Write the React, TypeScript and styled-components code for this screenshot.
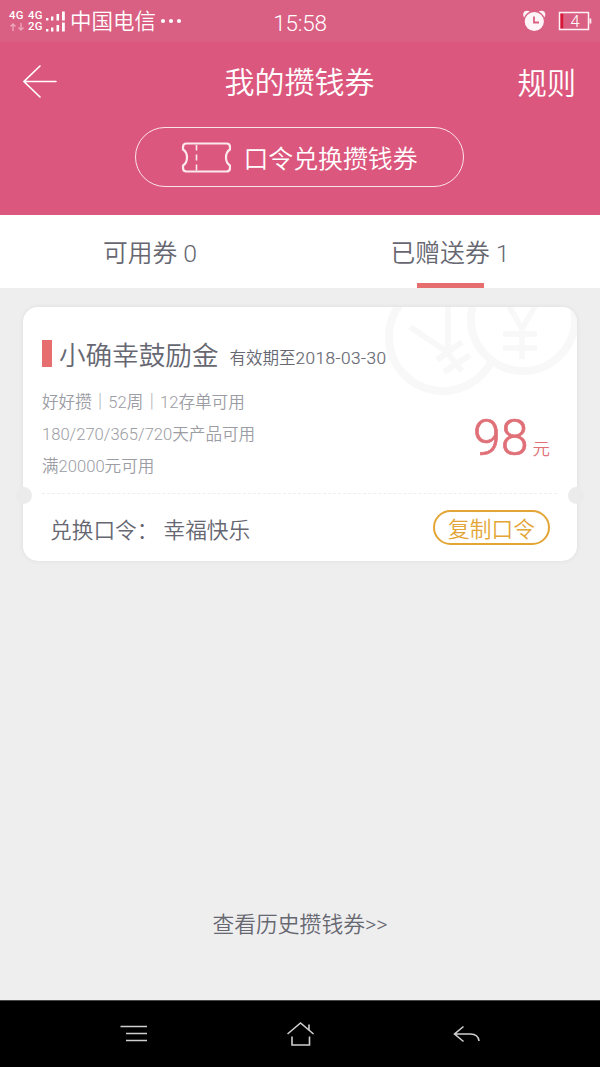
import React from 'react';
import styled, { createGlobalStyle } from 'styled-components';

const GlobalStyle = createGlobalStyle`
  * { box-sizing: border-box; }
  body {
    margin: 0;
    background: #eeeeee;
    font-family: Roboto, 'Noto Sans CJK SC', sans-serif;
    font-weight: 350;
    -webkit-font-smoothing: antialiased;
  }
`;

const Screen = styled.div`
  width: 600px;
  height: 1067px;
  display: flex;
  flex-direction: column;
  background: #eeeeee;
  overflow: hidden;
  white-space: nowrap;
`;

const StatusBar = styled.div`
  height: 42px;
  display: grid;
  grid-template-columns: 1fr auto 1fr;
  align-items: center;
  padding: 0 8px 0 9px;
  background: #d95f83;
  color: #fff;
`;

const StatusLeft = styled.div`
  display: flex;
  align-items: center;
`;

const StatusRight = styled.div`
  display: flex;
  align-items: center;
  justify-content: flex-end;
  gap: 12px;
`;

const Carrier = styled.span`
  font-size: 21.5px;
  line-height: 30px;
  padding-top: 2px;
  margin-left: 5px;
`;

const Clock = styled.span`
  font-size: 22.5px;
  line-height: 30px;
  padding: 3px 1px 0 0;
  letter-spacing: -0.2px;
`;

const Header = styled.header`
  height: 173px;
  background: #dc577e;
  color: #fff;
  display: flex;
  flex-direction: column;
  align-items: center;
`;

const NavRow = styled.div`
  width: 100%;
  height: 80px;
  display: grid;
  grid-template-columns: 1fr auto 1fr;
  align-items: center;
  padding: 0 24px 0 23px;
`;

const NavTitle = styled.h1`
  margin: 0;
  font-size: 30px;
  font-weight: inherit;
  line-height: 40px;
  padding-top: 2px;
`;

const RuleLink = styled.span`
  justify-self: end;
  font-size: 29.3px;
  line-height: 40px;
  padding-top: 4px;
`;

const RedeemButton = styled.button`
  width: 329px;
  height: 60px;
  margin: 5px 1px 0 0;
  padding: 0;
  display: flex;
  align-items: center;
  justify-content: center;
  gap: 12px;
  border: 1.5px solid #fbe3ea;
  border-radius: 30px;
  background: none;
  color: #fff;
  font: inherit;
  font-size: 24.9px;
`;

const Tabs = styled.nav`
  height: 73px;
  display: grid;
  grid-template-columns: 1fr 1fr;
  background: #fff;
`;

const Tab = styled.div<{ $active?: boolean }>`
  display: flex;
  flex-direction: column;
  align-items: center;
  color: #666771;
  font-size: 24.8px;
  line-height: 78px;
  height: 73px;
  &::after {
    content: '';
    width: 67px;
    height: 5px;
    margin-top: -10px;
    background: ${(p) => (p.$active ? '#e66e6e' : 'transparent')};
  }
`;

const Main = styled.main`
  height: 712px;
  display: flex;
  flex-direction: column;
  align-items: center;
  padding-top: 19px;
`;

const Card = styled.section`
  position: relative;
  width: 554px;
  height: 254px;
  border-radius: 15px;
  background: #fff;
  box-shadow: 0 0 5px rgba(0, 0, 0, 0.07);
`;

const Watermark = styled.svg`
  position: absolute;
  top: 0;
  right: 0;
  border-radius: 0 15px 0 0;
`;

const Notch = styled.i<{ $side: 'left' | 'right' }>`
  position: absolute;
  top: 180px;
  ${(p) => p.$side}: -8px;
  width: 17px;
  height: 17px;
  border-radius: 50%;
  background: #ebebeb;
`;

const CardTop = styled.div`
  position: relative;
  height: 187px;
  margin: 0 20px 0 19px;
  padding-top: 30px;
  border-bottom: 1px dashed #eeeeee;
`;

const TitleRow = styled.div`
  display: flex;
  height: 34px;
`;

const Marker = styled.i`
  width: 10px;
  height: 27px;
  margin: 3px 7px 0 0;
  background: #e66e6e;
`;

const CouponName = styled.h2`
  margin: 0;
  font-size: 26.6px;
  font-weight: inherit;
  line-height: 37px;
  color: #666771;
`;

const Validity = styled.span`
  margin-left: 11px;
  font-size: 16.5px;
  line-height: 43px;
  color: #666771;
`;

const ValidityDate = styled.span`
  font-size: 17.2px;
  letter-spacing: 0.48px;
  -webkit-text-stroke: 0.2px #666771;
`;

const Conditions = styled.div`
  display: flex;
  justify-content: space-between;
  margin-top: 16px;
`;

const ConditionList = styled.ul`
  margin: 0;
  padding: 0;
  list-style: none;
  font-size: 16.6px;
  line-height: 32.2px;
  color: #9b9ca4;
`;

const Amount = styled.div`
  display: flex;
  align-items: baseline;
  gap: 4px;
  padding: 21px 7px 0 0;
  color: #e07078;
  font-size: 17.5px;
  line-height: 60px;
`;

const AmountValue = styled.strong`
  font-size: 50px;
  font-weight: 300;
  -webkit-text-stroke: 0.7px #e07078;
`;

const CardBottom = styled.div`
  height: 67px;
  display: flex;
  align-items: center;
  justify-content: space-between;
  padding: 2px 27px 0 27px;
  color: #666771;
  font-size: 21.7px;
`;

const Code = styled.span`
  margin-left: 5px;
`;

const CopyButton = styled.button`
  width: 117px;
  height: 35px;
  padding: 5px 0 0;
  margin-top: -2px;
  border: 2px solid #e3a535;
  border-radius: 18px;
  background: #fff;
  color: #e3a535;
  font: inherit;
  line-height: 26px;
`;

const HistoryLink = styled.a`
  margin-top: 348px;
  font-size: 21.8px;
  line-height: 32px;
  color: #666771;
`;

const SystemNav = styled.footer`
  height: 67px;
  display: flex;
  align-items: center;
  justify-content: space-between;
  padding: 0 120px 0 119px;
  background: #000;
  border-top: 1px solid #484848;
`;

const SignalBlock = styled.div`
  display: grid;
  grid-template-columns: 19px 18px 19px;
  grid-template-rows: 11px 11px;
  align-items: center;
  font: 500 11px/11px Roboto, sans-serif;
  letter-spacing: 0.4px;
`;

const SignalLabel = styled.span`
  font-size: 11.3px;
  line-height: 11px;
`;

const Arrows = () => (
  <svg width="15" height="10" viewBox="0 0 15 10" fill="none" stroke="#eda6ba" strokeWidth="1.400">
    <path d="M4 9V2M1.500 4.500L4 2l2.500 2.500M12 1v7M9.500 5.500L12 8l2.500-2.500" />
  </svg>
);

const Bars = () => (
  <svg width="19" height="10" viewBox="0 0 19 10" fill="#fff">
    <rect x="0" y="7" width="2.400" height="2.500" />
    <rect x="5" y="5.500" width="2.400" height="4" />
    <rect x="10.500" y="3" width="2.600" height="6.500" />
    <rect x="16" y="0.500" width="2.800" height="9" />
  </svg>
);

const SignalIcon = () => (
  <SignalBlock>
    <SignalLabel>4G</SignalLabel>
    <SignalLabel>4G</SignalLabel>
    <Bars />
    <Arrows />
    <SignalLabel>2G</SignalLabel>
    <Bars />
  </SignalBlock>
);

const Dots = styled.svg`
  margin-left: 4px;
`;

const DotsIcon = () => (
  <Dots width="24" height="6" viewBox="0 0 24 6" fill="#fff">
    <circle cx="3" cy="3" r="2.100" />
    <circle cx="11" cy="3" r="2.100" />
    <circle cx="19" cy="3" r="2.100" />
  </Dots>
);

const AlarmIcon = () => (
  <svg width="24" height="22" viewBox="0 0 24 22">
    <g fill="#fff4f7">
      <circle cx="5" cy="4.500" r="3.800" />
      <circle cx="19.500" cy="4.500" r="3.800" />
    </g>
    <circle cx="12.300" cy="11.500" r="10.200" fill="#fff4f7" stroke="#d95f83" strokeWidth="1.200" />
    <path d="M12 6.500v6h5" fill="none" stroke="#d95f83" strokeWidth="1.800" />
  </svg>
);

const BatteryIcon = () => (
  <svg width="34" height="20" viewBox="0 0 34 20">
    <rect x="1.500" y="1.500" width="29" height="17" fill="none" stroke="#fff0f4" strokeWidth="1.500" />
    <rect x="31.500" y="7.500" width="1.800" height="5" fill="#fff0f4" />
    <rect x="2.600" y="2.800" width="2.600" height="14.500" fill="#d81735" />
    <text x="12.500" y="16" fill="#fff" fontFamily="Roboto" fontSize="16.500" fontWeight="300">4</text>
  </svg>
);

const BackArrow = () => (
  <svg width="36" height="36" viewBox="0 0 36 36" fill="none" stroke="#fff" strokeWidth="1.600" strokeLinecap="round">
    <path d="M33 17.500H1M17 2L1 17.500l16 15.500" />
  </svg>
);

const TicketIcon = () => (
  <svg width="50" height="31" viewBox="0 0 50 31" fill="none" stroke="#fbe9ee" strokeWidth="2.200" strokeLinejoin="round">
    <path d="M5.500 1.500H45.500Q49 1.500 49 5V7.500Q45 10 45 15.500Q45 21 49 23.500V26Q49 29.500 45.500 29.500H5.500Q2 29.500 2 26V23.500Q6 21 6 15.500Q6 10 2 7.500V5Q2 1.500 5.500 1.500Z" />
    <path d="M15.500 3v5.500M15.500 12.500v6M15.500 22.500v6" strokeWidth="1.600" />
  </svg>
);

const CoinWatermark = () => (
  <Watermark width="194" height="94" viewBox="0 0 194 94" fill="none" stroke="#f8f8f8" strokeWidth="8">
    <circle cx="60" cy="30" r="54" />
    <path d="M27 20L63 44M65 0V44M63 44L79 64M54 53L79 35M61 65L87 48" strokeWidth="6" />
    <circle cx="140" cy="12" r="52" fill="#fff" />
    <path d="M122 -8L139 22L156 -8M139 22V52M120 27H154M120 41H154" strokeWidth="5.500" />
  </Watermark>
);

const MenuIcon = () => (
  <svg width="30" height="20" viewBox="0 0 30 20" fill="none" stroke="#cfcfcf" strokeWidth="1.600">
    <path d="M1.500 2.500H28M7 9.500H28M7 16.500H28" />
  </svg>
);

const HomeIcon = () => (
  <svg width="28" height="26" viewBox="0 0 28 26" fill="none" stroke="#cfcfcf" strokeWidth="1.600">
    <path d="M0.500 13L13.500 2L26.500 13M22 9V3.500M5 15.500V24H22.500V15.500" />
  </svg>
);

const ReturnIcon = () => (
  <svg width="27" height="18" viewBox="0 0 27 18" fill="none" stroke="#cfcfcf" strokeWidth="1.600">
    <path d="M10.500 1.500L1.500 9L10.500 16.500M1.500 9H17.500Q25 9 26 16" />
  </svg>
);

const conditions = ['好好攒｜52周｜12存单可用', '180/270/365/720天产品可用', '满20000元可用'];

export default function App() {
  return (
    <Screen>
      <GlobalStyle />
      <StatusBar>
        <StatusLeft>
          <SignalIcon />
          <Carrier>中国电信</Carrier>
          <DotsIcon />
        </StatusLeft>
        <Clock>15:58</Clock>
        <StatusRight>
          <AlarmIcon />
          <BatteryIcon />
        </StatusRight>
      </StatusBar>
      <Header>
        <NavRow>
          <BackArrow />
          <NavTitle>我的攒钱券</NavTitle>
          <RuleLink>规则</RuleLink>
        </NavRow>
        <RedeemButton>
          <TicketIcon />
          口令兑换攒钱券
        </RedeemButton>
      </Header>
      <Tabs>
        <Tab>可用券 0</Tab>
        <Tab $active>已赠送券 1</Tab>
      </Tabs>
      <Main>
        <Card>
          <CoinWatermark />
          <CardTop>
            <TitleRow>
              <Marker />
              <CouponName>小确幸鼓励金</CouponName>
              <Validity>
                有效期至<ValidityDate>2018-03-30</ValidityDate>
              </Validity>
            </TitleRow>
            <Conditions>
              <ConditionList>
                {conditions.map((c) => (
                  <li key={c}>{c}</li>
                ))}
              </ConditionList>
              <Amount>
                <AmountValue>98</AmountValue>元
              </Amount>
            </Conditions>
          </CardTop>
          <CardBottom>
            <span>
              兑换口令：<Code>幸福快乐</Code>
            </span>
            <CopyButton>复制口令</CopyButton>
          </CardBottom>
          <Notch $side="left" />
          <Notch $side="right" />
        </Card>
        <HistoryLink>查看历史攒钱券&gt;&gt;</HistoryLink>
      </Main>
      <SystemNav>
        <MenuIcon />
        <HomeIcon />
        <ReturnIcon />
      </SystemNav>
    </Screen>
  );
}
